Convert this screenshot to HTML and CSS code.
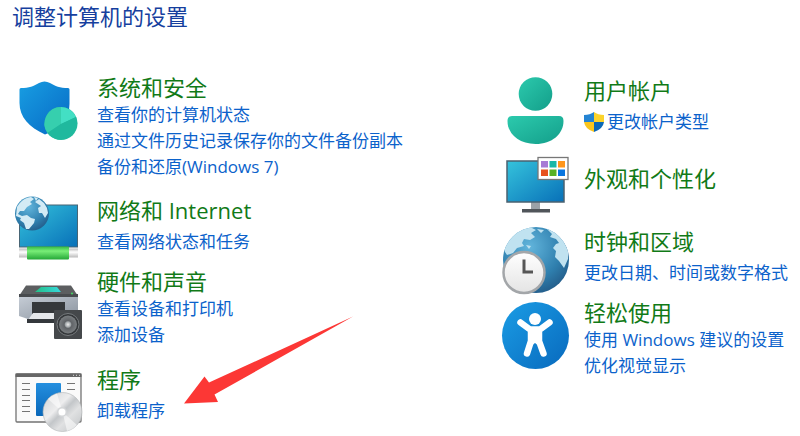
FILE: index.html
```html
<!DOCTYPE html>
<html lang="zh-CN">
<head>
<meta charset="utf-8">
<meta name="viewport" content="width=device-width, initial-scale=1">
<title>控制面板</title>
<link rel="stylesheet" href="styles.css">
</head>
<body>
<main class="panel">
  <h1 class="title">调整计算机的设置</h1>
  <div class="columns">
    <div class="column">
      <section class="category">
        <svg class="icon" viewBox="15 74 68 68" aria-hidden="true">
          <defs>
            <linearGradient id="shield" x1="0" y1="0" x2="1" y2="1"><stop offset="0" stop-color="#189ee2"/><stop offset="1" stop-color="#0768c4"/></linearGradient>
          </defs>
          <path d="M19.5 89.500Q19.500 88 21 88C29 88 34 86 39 83Q44.500 80 50 83C55 86 60 88 68 88Q69.500 88 69.500 89.500V104C69.500 119 60 129 45 134.500C29 127 19.500 117 19.500 103Z" fill="url(#shield)"/>
          <circle cx="61" cy="123.500" r="16.500" fill="#27bd9f"/>
          <path d="M61 107A16.500 16.500 0 0 0 47.500 133L61 124Z" fill="#36cfae"/>
          <path d="M61 107A16.500 16.500 0 0 1 76 117L61 124Z" fill="#43dfc4"/>
          <path d="M76 117A16.500 16.500 0 0 1 47.500 133L61 124Z" fill="#20b99e"/>
        </svg>
        <div class="text">
          <h2><a href="#">系统和安全</a></h2>
          <ul>
            <li><a href="#">查看你的计算机状态</a></li>
            <li><a href="#">通过文件历史记录保存你的文件备份副本</a></li>
            <li><a href="#">备份和还原(Windows 7)</a></li>
          </ul>
        </div>
      </section>

      <section class="category network">
        <svg class="icon" viewBox="15 197 68 68" aria-hidden="true">
          <defs>
            <linearGradient id="screen" x1="0" y1="0" x2="1" y2="1"><stop offset="0" stop-color="#35c3dc"/><stop offset="1" stop-color="#0870b8"/></linearGradient>
            <radialGradient id="globe" cx=".4" cy=".3" r=".75"><stop offset="0" stop-color="#62b5dc"/><stop offset=".65" stop-color="#2f7fae"/><stop offset="1" stop-color="#235b88"/></radialGradient>
            <linearGradient id="cable" x1="0" y1="0" x2="0" y2="1"><stop offset="0" stop-color="#32ba43"/><stop offset=".35" stop-color="#79ee78"/><stop offset="1" stop-color="#24a837"/></linearGradient>
            <linearGradient id="plug" x1="0" y1="0" x2="0" y2="1"><stop offset="0" stop-color="#bbb"/><stop offset=".4" stop-color="#fff"/><stop offset="1" stop-color="#bbb"/></linearGradient>
          </defs>
          <rect x="19.500" y="205" width="58" height="42" fill="url(#screen)" stroke="#486575"/>
          <rect x="19" y="248.500" width="59" height="9" fill="url(#plug)"/>
          <rect x="27" y="246.500" width="42" height="13" rx="1" fill="url(#cable)"/>
          <circle cx="32" cy="213.500" r="17" fill="url(#globe)"/>
          <path d="M17 207C20 202 24 198 31 197L34 199 30 202 32 204 27 207 24 211 20 211 18 214 22 216 21 218 16 216ZM22 216L27 215 31 218 35 219 34 223 29 229 26 229 24 223 20 220ZM35 202L39 199 44 203 47 208 48 213 45 218 42 213 39 213 38 208 41 206ZM34 197L38 198 36 201Z" fill="#d3ebf5"/>
        </svg>
        <div class="text spaced">
          <h2><a href="#">网络和 Internet</a></h2>
          <ul>
            <li><a href="#">查看网络状态和任务</a></li>
          </ul>
        </div>
      </section>

      <section class="category hardware">
        <svg class="icon" viewBox="15 274 68 68" aria-hidden="true">
          <defs>
            <linearGradient id="printer" x1="0" y1="0" x2="1" y2="1"><stop offset="0" stop-color="#c7ced7"/><stop offset="1" stop-color="#8b949f"/></linearGradient>
            <linearGradient id="glass" x1="0" y1="0" x2="1" y2="0"><stop offset="0" stop-color="#23bd86"/><stop offset="1" stop-color="#37d9dd"/></linearGradient>
            <radialGradient id="speaker"><stop offset="0" stop-color="#eee"/><stop offset=".3" stop-color="#a0a5a8"/><stop offset=".42" stop-color="#606367"/><stop offset="1" stop-color="#7a7e81"/></radialGradient>
          </defs>
          <path d="M26 285.500H71L78 296H19Z" fill="#5c5e60"/>
          <path d="M41 287H57L61 292H35Z" fill="url(#glass)"/>
          <path d="M19 295H78V317H73L70 319H28L19 316Z" fill="url(#printer)"/>
          <path d="M19 294H78V297H19Z" fill="#484b4e"/>
          <circle cx="72" cy="293.500" r="1" fill="#43db61"/>
          <rect x="32" y="302" width="33" height="12" fill="#35383b"/>
          <path d="M33 313H58V320H28Z" fill="#e5e7ea"/>
          <path d="M27 319H57V323H27Z" fill="#34383c"/>
          <rect x="54" y="310" width="28" height="29" rx="1" fill="#45484b"/>
          <circle cx="68" cy="324.500" r="11" fill="#34373a" stroke="#777b7e"/>
          <circle cx="68" cy="324.500" r="9" fill="url(#speaker)"/>
        </svg>
        <div class="text">
          <h2><a href="#">硬件和声音</a></h2>
          <ul>
            <li><a href="#">查看设备和打印机</a></li>
            <li><a href="#">添加设备</a></li>
          </ul>
        </div>
      </section>

      <section class="category programs">
        <svg class="icon" viewBox="15 366 68 68" aria-hidden="true">
          <defs>
            <linearGradient id="tile" x1="0" y1="0" x2="0" y2="1"><stop offset="0" stop-color="#248fdf"/><stop offset="1" stop-color="#0967b9"/></linearGradient>
            <linearGradient id="disc" x1="0" y1="0" x2="1" y2="1"><stop offset="0" stop-color="#cfd2d4"/><stop offset=".38" stop-color="#ededee"/><stop offset=".5" stop-color="#c3c6c9"/><stop offset=".65" stop-color="#e0e1e2"/><stop offset="1" stop-color="#bec1c4"/></linearGradient>
          </defs>
          <rect x="16" y="374" width="65" height="48" rx="1" fill="#fafafa" stroke="#737373" stroke-width="1.300"/>
          <path d="M15.500 373.500H81.500V377H15.500Z" fill="#666"/>
          <path d="M73 375.300H80" stroke="#ddd" stroke-dasharray="1 2"/>
          <path d="M22 383.500H30M22 389.500H30M22 395.500H30M22 400.500H30M22 406.500H30M22 411.500H30M67 383.500H75M67 389.500H75" stroke="#747474" stroke-width="1.200"/>
          <rect x="36" y="383" width="25" height="33" rx="1" fill="url(#tile)"/>
          <circle cx="62.500" cy="412" r="19.500" fill="url(#disc)" stroke="#b0b3b6" stroke-width=".6"/>
          <path d="M62.500 412L48 399A19.500 19.500 0 0 1 57 393.400ZM62.500 412L67 431A19.500 19.500 0 0 0 77 425Z" fill="#fff" opacity=".55"/>
          <circle cx="62" cy="412" r="5" fill="#d4d6d8"/>
          <circle cx="62" cy="412" r="3.500" fill="#fff"/>
        </svg>
        <div class="text spaced">
          <h2><a href="#">程序</a></h2>
          <ul>
            <li><a href="#">卸载程序</a></li>
          </ul>
        </div>
        <svg class="pointer" viewBox="183 315 171 90" aria-hidden="true">
          <path d="M353 316.500L209 382.500 204.500 376.500 184 403.500 218 402 214.500 394.500Z" fill="#fc3735"/>
        </svg>
      </section>
    </div>

    <div class="column second">
      <section class="category">
        <svg class="icon" viewBox="502 77 68 68" aria-hidden="true">
          <defs>
            <linearGradient id="person" x1="0" y1="0" x2="1" y2="1"><stop offset="0" stop-color="#2ccaad"/><stop offset="1" stop-color="#139e8a"/></linearGradient>
          </defs>
          <circle cx="535.500" cy="94" r="16.800" fill="url(#person)"/>
          <path d="M512 116H559Q563.500 116 563.500 121C563.500 134 552 144 535.500 144S507.500 134 507.500 121Q507.500 116 512 116Z" fill="url(#person)"/>
        </svg>
        <div class="text spaced">
          <h2><a href="#">用户帐户</a></h2>
          <ul>
            <li class="guarded">
              <svg class="uac" viewBox="0 0 20 20" aria-hidden="true">
                <path d="M10 0Q6 3 0 3V10H10Z" fill="#2484d3"/>
                <path d="M10 0Q14 3 20 3V10H10Z" fill="#fbd32c"/>
                <path d="M0 10H10V20Q1 17 0 10Z" fill="#f9c51d"/>
                <path d="M20 10H10V20Q19 17 20 10Z" fill="#0b67b7"/>
              </svg>
              <a href="#">更改帐户类型</a>
            </li>
          </ul>
        </div>
      </section>

      <section class="category centered">
        <svg class="icon" viewBox="502 145 68 68" aria-hidden="true">
          <path d="M531 202H540V210H531Z" fill="#9ba2a8"/>
          <rect x="522" y="209" width="28" height="3.500" fill="#50555a"/>
          <rect x="507" y="161" width="57" height="41" fill="url(#screen)" stroke="#4b6270" stroke-width="1.500"/>
          <rect x="538" y="157.500" width="30" height="22" fill="#fff" stroke="#777" stroke-width="1.300"/>
          <path d="M541 161H548V167.500H541Z" fill="#a77bd5"/><path d="M549.500 161H556.500V167.500H549.500Z" fill="#18b7a7"/><path d="M558 161H565V167.500H558Z" fill="#ff961b"/>
          <path d="M541 169.500H548V176H541Z" fill="#e7511d"/><path d="M549.500 169.500H556.500V176H549.500Z" fill="#57b025"/><path d="M558 169.500H565V176H558Z" fill="#0875df"/>
        </svg>
        <div class="text">
          <h2><a href="#">外观和个性化</a></h2>
        </div>
      </section>

      <section class="category clock">
        <svg class="icon" viewBox="502 226 68 68" aria-hidden="true">
          <defs>
            <clipPath id="earth"><circle cx="536" cy="260" r="33"/></clipPath>
            <linearGradient id="dial" x1="0" y1="0" x2="0" y2="1"><stop offset="0" stop-color="#fff"/><stop offset="1" stop-color="#e4e4e4"/></linearGradient>
          </defs>
          <circle cx="536" cy="260" r="33" fill="url(#globe)"/>
          <g clip-path="url(#earth)" fill="#c0e2f0">
            <path d="M504 248L509 239 519 230 530 227 536 230 531 233 535 237 530 240 524 239 522 243 524 246 517 248 513 253 507 255 505 252Z"/>
            <path d="M546 228L554 231 563 240 568 250 568 259 564 268 559 261 555 257 556 251 553 248 556 244 559 243 556 239 550 237 552 234Z"/>
            <path d="M537 229L544 230 541 233ZM526 245L531 246 529 249Z"/>
          </g>
          <circle cx="524" cy="272.500" r="20.500" fill="url(#dial)" stroke="#a3a6a9" stroke-width="2.500"/>
          <path d="M524 259.500V272H533" fill="none" stroke="#565656" stroke-width="3"/>
        </svg>
        <div class="text spaced">
          <h2><a href="#">时钟和区域</a></h2>
          <ul>
            <li><a href="#">更改日期、时间或数字格式</a></li>
          </ul>
        </div>
      </section>

      <section class="category access">
        <svg class="icon" viewBox="502 299 68 68" aria-hidden="true">
          <defs>
            <linearGradient id="round" x1="0" y1="0" x2="1" y2="1"><stop offset="0" stop-color="#1b9de5"/><stop offset="1" stop-color="#0869bd"/></linearGradient>
          </defs>
          <circle cx="535.500" cy="335.500" r="33.500" fill="url(#round)"/>
          <circle cx="535" cy="319" r="6" fill="#fff"/>
          <path d="M520.500 322.500L530 329.500H540L549.500 322.500M527 353.500L531 341V331H539V341L543.500 353.500" fill="none" stroke="#fff" stroke-width="6.500" stroke-linecap="round" stroke-linejoin="round"/>
          <path d="M529 329H541V342L539 346 535 343 531 346 529 342Z" fill="#fff"/>
        </svg>
        <div class="text">
          <h2><a href="#">轻松使用</a></h2>
          <ul>
            <li><a href="#">使用 Windows 建议的设置</a></li>
            <li><a href="#">优化视觉显示</a></li>
          </ul>
        </div>
      </section>
    </div>
  </div>
</main>
</body>
</html>
```
FILE: styles.css
```css
* {
  box-sizing: border-box;
}

body {
  margin: 0;
  background: #fff;
  font-family: "Open Sans", "Noto Sans CJK SC", sans-serif;
  font-size: 17px;
  line-height: 26px;
}

h1,
h2,
ul {
  margin: 0;
  padding: 0;
  font-weight: 400;
}

ul {
  list-style: none;
}

a {
  color: #0b62cb;
  text-decoration: none;
}

a:hover {
  text-decoration: underline;
}

.title {
  padding: 2px 12px;
  color: #163f9e;
  font-size: 22px;
  line-height: 28px;
}

.columns {
  display: grid;
  grid-template-columns: 487fr 298fr;
  padding: 42px 0 0 15px;
}

.second {
  padding-top: 3px;
}

.category {
  position: relative;
  display: flex;
  align-items: flex-start;
  gap: 14px;
}

.icon {
  flex: none;
  width: 68px;
  height: 68px;
  overflow: visible;
}

.text {
  min-width: 0;
  white-space: nowrap;
}

.text h2 {
  padding-bottom: 2px;
  font-size: 22px;
  line-height: 26px;
}

.text h2 a {
  color: #117a17;
}

.spaced ul {
  margin-top: 4px;
}

.network {
  margin-top: 17px;
}

.hardware {
  align-items: center;
  margin-top: 3px;
}

.programs {
  margin-top: 18px;
}

.centered {
  align-items: center;
}

.clock {
  margin-top: 13px;
}

.clock .text {
  padding-top: 2px;
}

.access {
  margin-top: 5px;
}

.guarded {
  display: flex;
  align-items: center;
  gap: 3px;
}

.uac {
  width: 20px;
  height: 20px;
}

.pointer {
  position: absolute;
  top: -51px;
  left: 168px;
  width: 171px;
  height: 90px;
  pointer-events: none;
}
```
